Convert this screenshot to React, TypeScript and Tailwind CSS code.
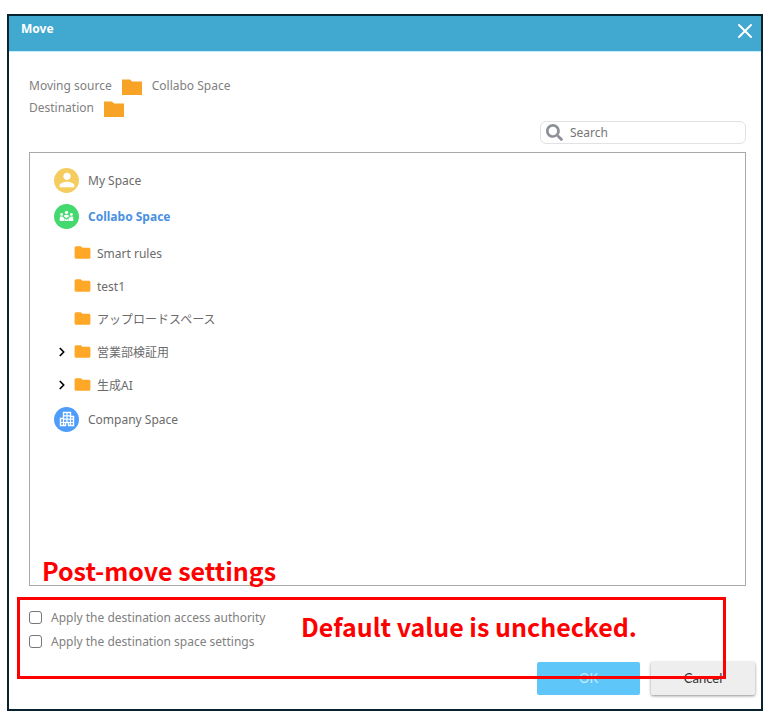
import React, { useState } from 'react';
import { ChevronRight, X } from 'lucide-react';
import { FaSearch } from 'react-icons/fa';
import { MdPerson, MdFolder } from 'react-icons/md';

interface Folder {
  name: string;
  expandable?: boolean;
}

const folders: Folder[] = [
  { name: 'Smart rules' },
  { name: 'test1' },
  { name: 'アップロードスペース' },
  { name: '営業部検証用', expandable: true },
  { name: '生成AI', expandable: true },
];

function PathFolderIcon() {
  return (
    <svg className="w-5 h-4 mt-1 shrink-0" viewBox="0 0 20 16" fill="#f7a325" aria-hidden="true">
      <path d="M0 0.5h8l2 2h10V16H0z" />
    </svg>
  );
}

function GroupIcon() {
  return (
    <svg className="w-[15px] h-[15px]" viewBox="0 0 16 16" fill="white" aria-hidden="true">
      <circle cx="8" cy="3.6" r="1.8" />
      <circle cx="2.8" cy="5.8" r="1.5" />
      <circle cx="13.2" cy="5.8" r="1.5" />
      <path d="M4.8 7.4C5.6 6.6 6.6 6.2 8 6.2s2.4.4 3.2 1.2L8 9.8z" />
      <path d="M.8 12.8V9.2c0-.7.6-1.2 1.3-1.2h1.3L6 10v2.8z" />
      <path d="M15.2 12.8V9.2c0-.7-.6-1.2-1.3-1.2h-1.3L10 10v2.8z" />
      <path d="M6.4 10.4l1.6 1 1.6-1v2.4H6.4z" />
    </svg>
  );
}

function BuildingIcon() {
  return (
    <svg className="w-4 h-4" viewBox="0 0 16 16" fill="none" stroke="white" aria-hidden="true">
      <path strokeWidth="1.4" d="M1.5 14.5V7.5H4.5V1.5H11.5V5.5H14.5V14.5H9.5V11.5H6.5V14.5z" />
      <path strokeWidth="1.2" d="M4.5 7.5v7M8 1.5v10M11.5 5.5v9M4.5 4.8h7M4.5 8.2h10M1.5 11.5h13" />
    </svg>
  );
}

interface SpaceRowProps {
  label: string;
  active?: boolean;
  badge: string;
  icon: React.ReactNode;
}

function SpaceRow({ label, active, badge, icon }: SpaceRowProps) {
  return (
    <button type="button" className="flex items-center h-9 pl-6 gap-[9px]">
      <span className={`w-[25px] h-[25px] rounded-full flex items-center justify-center ${badge}`}>{icon}</span>
      <span className={`pt-0.5 ${active ? 'font-bold text-[#4a90e2]' : 'text-[#6b6b6b]'}`}>{label}</span>
    </button>
  );
}

function FolderRow({ name, expandable }: Folder) {
  return (
    <li className="flex items-center h-[33px] pl-[25px]">
      <span className="w-[18px] flex">
        {expandable && (
          <button type="button" aria-label={`Expand ${name}`}>
            <ChevronRight className="w-3.5 h-3.5 text-black" strokeWidth={3} />
          </button>
        )}
      </span>
      <button type="button" className="flex items-center gap-[5px] text-[#6b6b6b]">
        <MdFolder className="w-[19px] h-[19px] text-[#ffa726]" />
        <span className="pt-0.5">{name}</span>
      </button>
    </li>
  );
}

function SettingCheckbox({ label }: { label: string }) {
  return (
    <label className="flex items-center gap-[9px] h-6">
      <input type="checkbox" className="appearance-none w-[13px] h-[13px] border border-[#767676] rounded-[3px] checked:bg-[#41a8d0]" />
      <span className="pt-0.5">{label}</span>
    </label>
  );
}

export default function App() {
  const [query, setQuery] = useState('');

  return (
    <div className="min-h-screen flex bg-white pt-3.5 pl-[7px] pr-2.5 pb-[5px] font-['Noto_Sans','Noto_Sans_CJK_JP',sans-serif] text-[12px] leading-5">
      <div role="dialog" aria-labelledby="move-title" className="flex-1 flex flex-col border-2 border-[#06232f] bg-white">
        {/* Header */}
        <header className="h-9 flex items-start justify-between pl-3 pr-1 bg-[#41a8d0] border-b border-[#c3eefb] text-white">
          <h1 id="move-title" className="font-bold mt-[3px]">Move</h1>
          <button type="button" aria-label="Close" className="mt-[3px]">
            <X className="w-6 h-6" strokeWidth={2} />
          </button>
        </header>

        <main className="flex-1 flex flex-col pt-[22px] pl-5 pr-[15px] text-[#808080]">
          <div className="h-[22px] flex items-center gap-2.5">
            <span className="pt-0.5">Moving source</span>
            <PathFolderIcon />
            <span className="pt-0.5">Collabo Space</span>
          </div>
          <div className="h-[22px] flex items-center gap-2.5">
            <span className="pt-0.5">Destination</span>
            <PathFolderIcon />
          </div>

          <label className="self-end mt-[3px] w-[206px] h-[23px] flex items-center gap-[7px] pl-[5px] border border-[#e2e2e4] rounded-md">
            <FaSearch className="w-[17px] h-[17px] shrink-0 text-[#8e9099]" />
            <input
              type="text"
              aria-label="Search"
              placeholder="Search"
              value={query}
              onChange={(e) => setQuery(e.target.value)}
              className="w-full min-w-0 outline-none placeholder:text-[#757575]"
            />
          </label>

          {/* Space tree */}
          <div className="flex-1 mt-2 pt-[9px] pb-10 flex flex-col items-start border border-[#a9a9a9]">
            <SpaceRow label="My Space" badge="bg-[#f5cd5e]" icon={<MdPerson className="w-[22px] h-[22px] text-white" />} />
            <SpaceRow label="Collabo Space" active badge="bg-[#43d96f]" icon={<GroupIcon />} />
            <ul className="pt-0.5">
              {folders.map((folder) => (
                <FolderRow key={folder.name} {...folder} />
              ))}
            </ul>
            <SpaceRow label="Company Space" badge="bg-[#4f9dfb]" icon={<BuildingIcon />} />
          </div>
        </main>

        {/* Post-move options and actions */}
        <footer className="relative pt-[19px] pb-3.5 pl-5 pr-[6px] text-[#808080]">
          <SettingCheckbox label="Apply the destination access authority" />
          <SettingCheckbox label="Apply the destination space settings" />
          <div className="flex justify-end gap-[11px] mt-[9px] font-[Lato,sans-serif] text-[13px]">
            <button type="button" className="w-[103px] h-[33px] pb-0.5 rounded-xs bg-[#5ec6f8] text-[#c9ecfd]">OK</button>
            <button type="button" className="w-[104px] h-[33px] pb-0.5 rounded-xs bg-[#eeeeee] text-[#333] shadow-[0_1px_3px_rgba(0,0,0,0.45)]">Cancel</button>
          </div>

          {/* Callouts drawn over the dialog */}
          <div className="absolute top-[11px] left-2 right-[35px] h-[82px] border-3 border-[#ff0000] pointer-events-none" />
          <p className="absolute -top-[30px] left-[33px] font-['Noto_Sans_CJK_JP',sans-serif] font-bold text-[25px] leading-7 text-[#ff0000] whitespace-nowrap pointer-events-none">
            Post-move settings
          </p>
          <p className="absolute top-[26px] left-[292px] font-['Noto_Sans_CJK_JP',sans-serif] font-bold text-[25px] leading-7 text-[#ff0000] whitespace-nowrap pointer-events-none">
            Default value is unchecked.
          </p>
        </footer>
      </div>
    </div>
  );
}
